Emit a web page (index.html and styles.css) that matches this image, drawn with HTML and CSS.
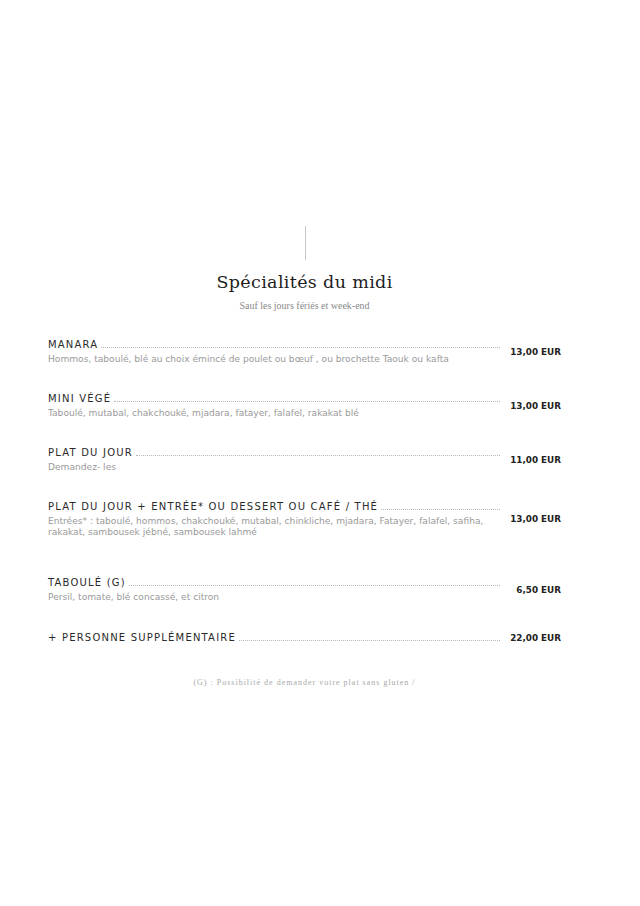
FILE: index.html
```html
<!DOCTYPE html>
<html lang="fr">
<head>
<meta charset="utf-8">
<link rel="stylesheet" href="styles.css">
</head>
<body>
<main class="page">
  <div class="rule"></div>
  <h1 class="title">Spécialités du midi</h1>
  <p class="subtitle">Sauf les jours fériés et week-end</p>
  <section class="menu">
    <div class="item">
      <div class="main">
        <div class="head"><span class="name">MANARA</span><span class="dots"></span></div>
        <p class="desc">Hommos, taboulé, blé au choix émincé de poulet ou bœuf , ou brochette Taouk ou kafta</p>
      </div>
      <div class="price">13,00 EUR</div>
    </div>
    <div class="item">
      <div class="main">
        <div class="head"><span class="name">MINI VÉGÉ</span><span class="dots"></span></div>
        <p class="desc">Taboulé, mutabal, chakchouké, mjadara, fatayer, falafel, rakakat blé</p>
      </div>
      <div class="price">13,00 EUR</div>
    </div>
    <div class="item">
      <div class="main">
        <div class="head"><span class="name">PLAT DU JOUR</span><span class="dots"></span></div>
        <p class="desc">Demandez- les</p>
      </div>
      <div class="price">11,00 EUR</div>
    </div>
    <div class="item item-wide">
      <div class="main">
        <div class="head"><span class="name">PLAT DU JOUR + ENTRÉE* OU DESSERT OU CAFÉ / THÉ</span><span class="dots"></span></div>
        <p class="desc">Entrées* : taboulé, hommos, chakchouké, mutabal, chinkliche, mjadara, Fatayer, falafel, safiha, rakakat, sambousek jébné, sambousek lahmé</p>
      </div>
      <div class="price">13,00 EUR</div>
    </div>
    <div class="item">
      <div class="main">
        <div class="head"><span class="name">TABOULÉ (G)</span><span class="dots"></span></div>
        <p class="desc">Persil, tomate, blé concassé, et citron</p>
      </div>
      <div class="price">6,50 EUR</div>
    </div>
    <div class="item item-last">
      <div class="main">
        <div class="head"><span class="name">+ PERSONNE SUPPLÉMENTAIRE</span><span class="dots"></span></div>
      </div>
      <div class="price">22,00 EUR</div>
    </div>
  </section>
  <p class="note">(G) : Possibilité de demander votre plat sans gluten /</p>
</main>
</body>
</html>
```
FILE: styles.css
```css
* { box-sizing: border-box; }
html, body { margin: 0; padding: 0; background: #fff; }
.page {
  width: 640px;
  padding: 226px 79px 0 48px;
  display: flex;
  flex-direction: column;
  font-family: "DejaVu Sans", sans-serif;
}
.rule {
  width: 1px;
  height: 34px;
  background: #c8c8c8;
  align-self: flex-start;
  margin-left: 257px;
}
.title {
  margin: 10px 0 0 0;
  text-align: center;
  font-family: "DejaVu Serif", serif;
  font-weight: normal;
  font-size: 17.5px;
  line-height: 24px;
  color: #1e1e1e;
  letter-spacing: 0.35px;
}
.subtitle {
  margin: 6px 0 0 0;
  text-align: center;
  font-family: "Liberation Serif", serif;
  font-size: 10px;
  line-height: 12px;
  color: #8a8a8a;
}
.menu {
  margin-top: 26px;
  display: flex;
  flex-direction: column;
  gap: 27px;
}
.item {
  display: flex;
  align-items: center;
  gap: 10px;
}
.item-wide { margin-bottom: 11px; }
.item-last { margin-top: 1px; }
.main { flex: 1; min-width: 0; }
.head {
  display: flex;
  align-items: baseline;
  gap: 3px;
}
.name {
  font-size: 10px;
  letter-spacing: 1.2px;
  color: #2a2a2a;
  white-space: nowrap;
  line-height: 14px;
}
.dots {
  flex: 1;
  border-bottom: 1px dotted #b8b8b8;
}
.desc {
  margin: 2px 0 0 0;
  font-size: 9.1px;
  line-height: 11px;
  color: #9a9a9a;
}
.price {
  min-width: 51px;
  text-align: right;
  font-size: 8.8px;
  font-weight: bold;
  color: #222;
  white-space: nowrap;
}
.note {
  margin: 33px 0 0 0;
  text-align: center;
  font-family: "Liberation Serif", serif;
  font-size: 8px;
  letter-spacing: 1px;
  color: #a8a8a8;
}
```
